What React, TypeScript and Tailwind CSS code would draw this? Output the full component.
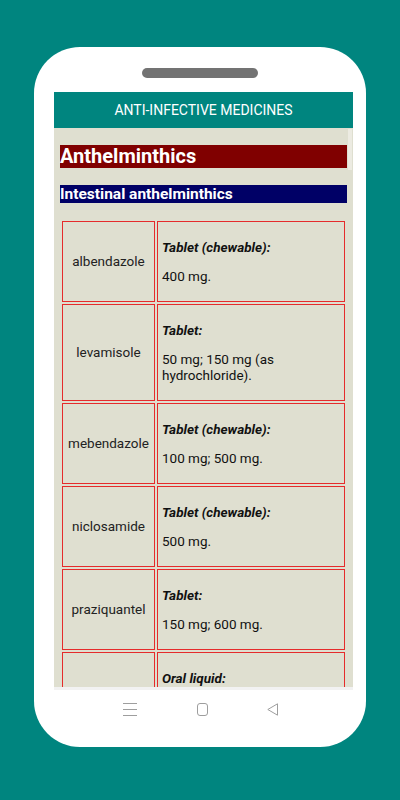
const rows = [
  { name: 'albendazole', form: 'Tablet (chewable):', dose: '400 mg.' },
  { name: 'levamisole', form: 'Tablet:', dose: '50 mg; 150 mg (as hydrochloride).' },
  { name: 'mebendazole', form: 'Tablet (chewable):', dose: '100 mg; 500 mg.' },
  { name: 'niclosamide', form: 'Tablet (chewable):', dose: '500 mg.' },
  { name: 'praziquantel', form: 'Tablet:', dose: '150 mg; 600 mg.' },
  { name: '', form: 'Oral liquid:', dose: '' },
]

function NavBar() {
  return (
    <div className="flex items-center self-start pl-[88px] mt-[13px] gap-[59px] text-[#9e9e9e]">
      <svg width="16" height="13" viewBox="0 0 16 13" fill="none" stroke="currentColor" strokeWidth="1">
        <path d="M1 0.5h14M1 6.5h14M1 12.5h14" />
      </svg>
      <svg width="11" height="13" viewBox="0 0 11 13" fill="none" stroke="currentColor" strokeWidth="1">
        <rect x="0.5" y="0.5" width="10" height="12" rx="2.5" />
      </svg>
      <svg width="11" height="13" viewBox="0 0 11 13" fill="none" stroke="currentColor" strokeWidth="1" strokeLinejoin="round">
        <path d="M10.5 0.8L0.8 6.5l9.7 5.7z" />
      </svg>
    </div>
  )
}

export default function App() {
  return (
    <div className="w-[400px] h-[800px] bg-[#00857f] flex justify-center pt-[47px] font-['Roboto',sans-serif] overflow-hidden">
      <div className="w-[332px] h-[700px] bg-white rounded-[46px] flex flex-col items-center">
        <div className="mt-[21px] w-[116px] h-[10px] rounded-full bg-[#737373]" />
        <div className="mt-[14px] self-start ml-[20px] w-[299px] h-[598px] flex flex-col overflow-hidden">
          <div className="h-[36px] bg-[#00857f] flex items-center justify-center text-white text-[14px] shrink-0">
            ANTI-INFECTIVE MEDICINES
          </div>
          <div className="relative flex-1 bg-[#dfdfd0] px-[6px] overflow-hidden">
            <div className="absolute right-[1px] top-[1px] w-[4px] h-[41px] bg-[#ecebe2]" />
            <h1 className="mt-[17px] h-[23px] bg-[#800000] text-white font-bold text-[20px] leading-[23px]">
              Anthelminthics
            </h1>
            <h2 className="mt-[17px] h-[18px] bg-[#000066] text-white font-bold text-[15.5px] leading-[18px]">
              Intestinal anthelminthics
            </h2>
            <div className="mt-[16px] p-[2px] flex flex-col gap-[2px]">
              {rows.map((r, i) => (
                <div key={i} className="flex gap-[2px]">
                  <div className="w-[93px] shrink-0 border border-[#e52b2b] flex items-center justify-center text-[13.5px] text-[#222]">
                    {r.name}
                  </div>
                  <div className="flex-1 border border-[#e52b2b] px-[4px] py-[4px] text-[13.5px] leading-[16px] text-[#111]">
                    <p className="my-[13px] font-bold italic">{r.form}</p>
                    <p className="my-[13px] min-h-[16px]">{r.dose}</p>
                  </div>
                </div>
              ))}
            </div>
          </div>
          <div className="h-[3px] bg-[#f2f2f2] shrink-0" />
        </div>
        <NavBar />
      </div>
    </div>
  )
}
